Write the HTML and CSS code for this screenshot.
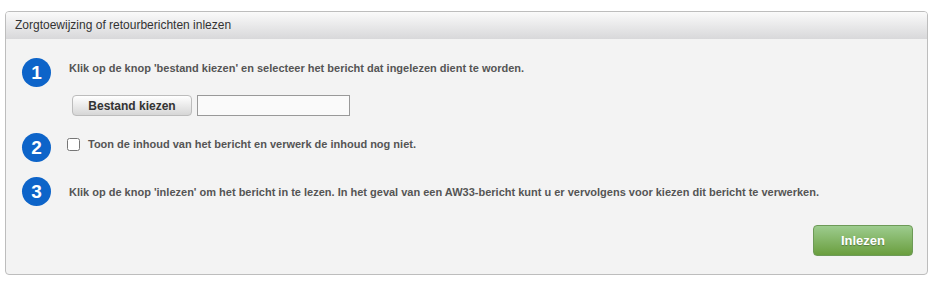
FILE: index.html
```html
<!DOCTYPE html>
<html lang="nl">
<head>
    <meta charset="UTF-8">
    <title>Zorgtoewijzing of retourberichten inlezen</title>
    <link rel="stylesheet" href="styles.css">
</head>
<body>
    <div class="panel">
        <div class="panel-header">Zorgtoewijzing of retourberichten inlezen</div>
        <div class="panel-body">
            <div class="step step-one">
                <div class="step-nr">1</div>
                <div class="step-content">
                    <p class="step-text">Klik op de knop 'bestand kiezen' en selecteer het bericht dat ingelezen dient te worden.</p>
                    <div class="file-row">
                        <button type="button" class="file-button">Bestand kiezen</button>
                        <input type="text" class="file-name">
                    </div>
                </div>
            </div>
            <div class="step step-two">
                <div class="step-nr">2</div>
                <div class="step-content">
                    <label class="check-row">
                        <input type="checkbox" class="check">
                        <span class="step-text">Toon de inhoud van het bericht en verwerk de inhoud nog niet.</span>
                    </label>
                </div>
            </div>
            <div class="step step-three">
                <div class="step-nr">3</div>
                <div class="step-content">
                    <p class="step-text">Klik op de knop 'inlezen' om het bericht in te lezen. In het geval van een AW33-bericht kunt u er vervolgens voor kiezen dit bericht te verwerken.</p>
                </div>
            </div>
            <div class="actions">
                <button type="button" class="read-button">Inlezen</button>
            </div>
        </div>
    </div>
</body>
</html>
```

FILE: styles.css
```css
body {
    margin: 0;
    padding: 11px 18px 0 5px;
    background-color: #ffffff;
    font-family: 'Liberation Sans', Arial, sans-serif;
}
.panel {
    box-sizing: border-box;
    width: 923px;
    border: 1px solid #bdbdbd;
    border-radius: 4px;
    background-color: #f3f3f3;
    overflow: hidden;
}
.panel-header {
    height: 27px;
    line-height: 26px;
    padding-left: 9px;
    font-size: 12px;
    color: #333333;
    background: linear-gradient(to bottom, #fafafa, #d8d8da);
}
.panel-body {
    padding: 19px 14px 18px 16px;
}
.step {
    display: flex;
    align-items: flex-start;
}
.step-nr {
    flex: none;
    width: 29px;
    height: 29px;
    border-radius: 50%;
    background-color: #0d64c9;
    color: #ffffff;
    font-size: 19px;
    font-weight: bold;
    line-height: 29px;
    text-align: center;
}
.step-content {
    margin-left: 18px;
}
.step-text {
    margin: 0;
    font-size: 11px;
    font-weight: bold;
    line-height: 14px;
    color: #555555;
}
.step-one .step-content {
    padding-top: 3px;
}
.file-row {
    display: flex;
    gap: 5px;
    margin-top: 20px;
    margin-left: 3px;
}
.file-button {
    width: 120px;
    height: 21px;
    padding: 0;
    border: 1px solid #bcbcbc;
    border-radius: 4px;
    background: linear-gradient(to bottom, #ffffff, #d6d6d6);
    font-family: inherit;
    font-size: 12px;
    font-weight: bold;
    color: #333333;
    cursor: pointer;
}
.file-name {
    box-sizing: border-box;
    width: 153px;
    height: 21px;
    margin: 0;
    border: 1px solid #999999;
    background-color: #fafafa;
}
.step-two {
    margin-top: 17px;
}
.step-two .step-content {
    margin-left: 16px;
    padding-top: 4px;
}
.check-row {
    display: flex;
    align-items: center;
    gap: 8px;
}
.check {
    width: 13px;
    height: 13px;
    margin: 0;
}
.step-three {
    margin-top: 15px;
}
.step-three .step-content {
    padding-top: 8px;
}
.actions {
    display: flex;
    justify-content: flex-end;
    margin-top: 19px;
}
.read-button {
    width: 100px;
    height: 31px;
    border: 1px solid #6d9a57;
    border-radius: 4px;
    background: linear-gradient(to bottom, #9dcc8e, #6a9e3e);
    font-family: inherit;
    font-size: 13px;
    font-weight: bold;
    color: #ffffff;
    text-shadow: 0 1px 1px rgba(0, 0, 0, 0.3);
    cursor: pointer;
}
```
